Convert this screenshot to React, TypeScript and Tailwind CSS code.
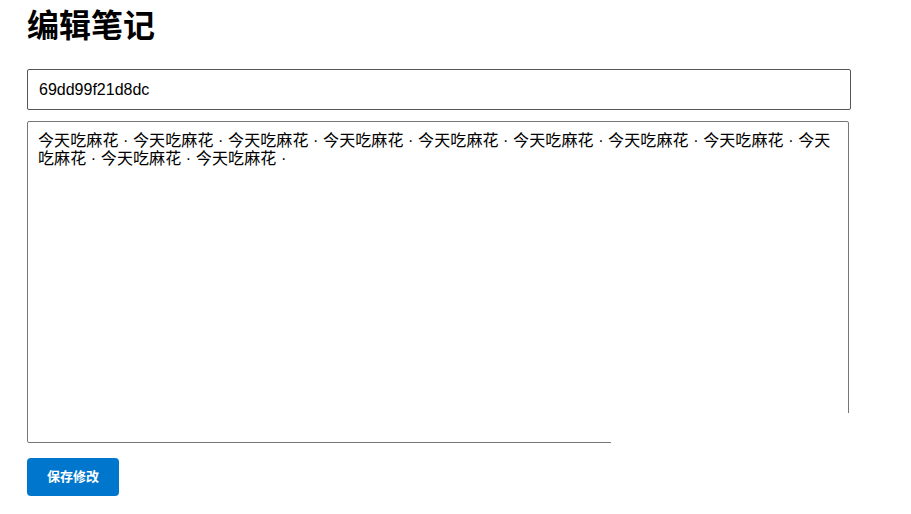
import { useState } from 'react';

const NOTE_TEXT = '今天吃麻花 · '.repeat(11);

export default function App() {
  const [title, setTitle] = useState('69dd99f21d8dc');
  const [body, setBody] = useState(NOTE_TEXT);

  return (
    <div className="relative min-h-screen bg-white px-[27px] pt-[3px] font-['Liberation_Sans','Noto_Sans_CJK_SC',sans-serif] text-black">
      <h1 className="text-[32px] font-bold leading-[46px]">编辑笔记</h1>

      <form className="mt-[20px] flex flex-col" onSubmit={(e) => e.preventDefault()}>
        <input
          value={title}
          onChange={(e) => setTitle(e.target.value)}
          className="h-[41px] w-[824px] rounded-[2px] border border-[#555] px-[11px] text-[16px] outline-none"
        />

        <textarea
          value={body}
          onChange={(e) => setBody(e.target.value)}
          className="mt-[11px] h-[322px] w-[822px] resize-none rounded-[2px] border border-[#767676] p-[10px] font-['Liberation_Sans','Noto_Sans_CJK_SC',sans-serif] text-[16px] leading-[18px] tracking-[0.1px] outline-none"
        />

        <button
          type="submit"
          className="mt-[15px] h-[38px] w-[92px] rounded-[4px] bg-[#0077cc] text-[13px] font-bold text-white"
        >
          保存修改
        </button>
      </form>

      {/* white patch over the textarea's lower-right corner, as in the capture */}
      <div className="absolute left-[611px] top-[413px] h-[40px] w-[260px] bg-white" />
    </div>
  );
}
